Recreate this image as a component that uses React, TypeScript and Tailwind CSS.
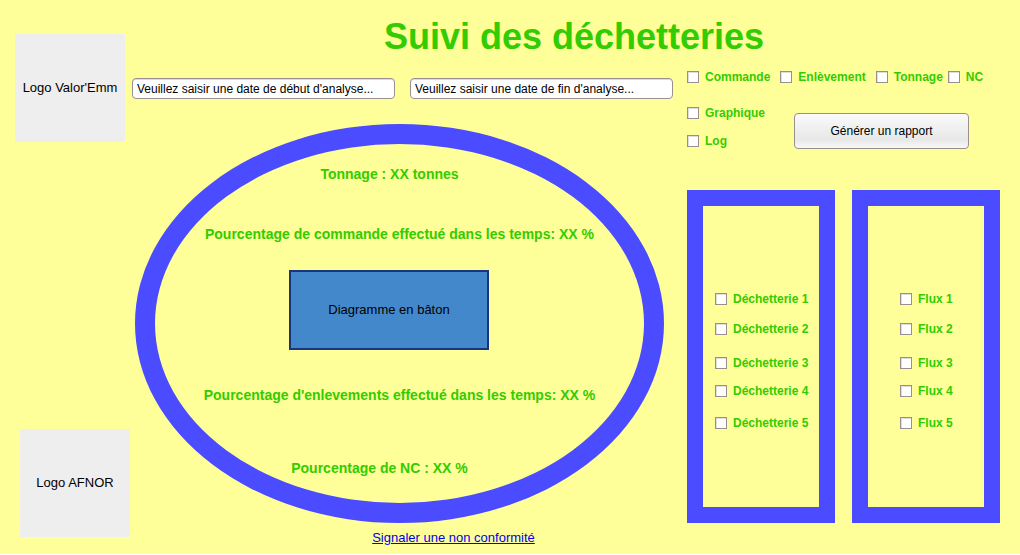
import React from "react";

type Option = { label: string; spacing?: string };

const sites: Option[] = [
  { label: "Déchetterie 1" },
  { label: "Déchetterie 2", spacing: "mt-3.5" },
  { label: "Déchetterie 3", spacing: "mt-4.5" },
  { label: "Déchetterie 4", spacing: "mt-3" },
  { label: "Déchetterie 5", spacing: "mt-4" },
];

const flows: Option[] = [
  { label: "Flux 1" },
  { label: "Flux 2", spacing: "mt-3.5" },
  { label: "Flux 3", spacing: "mt-4.5" },
  { label: "Flux 4", spacing: "mt-3" },
  { label: "Flux 5", spacing: "mt-4" },
];

function Check({ label, spacing = "" }: Option) {
  return (
    <label className={`flex h-4 items-center gap-1.5 text-xs font-bold whitespace-nowrap text-[#33cc00] ${spacing}`}>
      <input
        type="checkbox"
        className="size-3 shrink-0 appearance-none border border-[#998f8f] bg-white shadow-[inset_1px_1px_0_#dddddd] checked:bg-[#4b4bff]"
      />
      {label}
    </label>
  );
}

function Logo({ children, className = "" }: { children: React.ReactNode; className?: string }) {
  return (
    <div className={`flex h-[108px] w-[110px] items-center justify-center bg-[#eeeeee] text-[13px] text-black ${className}`}>
      {children}
    </div>
  );
}

function DateField({ label }: { label: string }) {
  return (
    <input
      type="text"
      aria-label={label}
      placeholder={label}
      className="h-[21px] min-w-0 flex-1 rounded border border-[#998f8f] bg-white px-1 text-xs text-black shadow-[inset_0_1px_0_#dddddd] placeholder:text-black placeholder:opacity-100"
    />
  );
}

function Panel({ options, className }: { options: Option[]; className: string }) {
  return (
    <fieldset className={`min-w-0 border-16 border-[#4b4bff] pt-[85px] pb-[76px] ${className}`}>
      {options.map((o) => (
        <Check key={o.label} {...o} />
      ))}
    </fieldset>
  );
}

export default function App() {
  return (
    <div className="flex bg-[#ffff99] pr-5 font-['Liberation_Sans',Arial,sans-serif]">
      <aside className="flex w-[132px] shrink-0 flex-col justify-between pt-[34px] pb-[17px]">
        <Logo className="ml-[15px]">Logo Valor'Emm</Logo>
        <Logo className="ml-5">Logo AFNOR</Logo>
      </aside>

      <div className="min-w-0 flex-1">
        <header className="pt-4 pl-4 text-center">
          <h1 className="text-4xl leading-[42px] font-bold text-[#33cc00]">Suivi des déchetteries</h1>
        </header>

        <div className="flex gap-3.5">
          <main className="min-w-0 flex-1 pt-5 pb-1.5">
            <div className="flex gap-[15px]">
              <DateField label="Veuillez saisir une date de début d'analyse..." />
              <DateField label="Veuillez saisir une date de fin d'analyse..." />
            </div>

            <section className="mt-[25px] mr-[9px] ml-[3px] flex flex-col items-center rounded-[50%] border-20 border-[#4b4bff] pt-5 pb-[25px] text-sm leading-5 font-bold whitespace-nowrap text-[#33cc00]">
              <p className="pr-5">Tonnage : XX tonnes</p>
              <p className="mt-10">Pourcentage de commande effectué dans les temps: XX %</p>
              <div className="mt-[26px] mr-[21px] flex h-20 w-[200px] items-center justify-center border-2 border-[#1a3580] bg-[#4488cc] text-[13px] font-normal text-black">
                Diagramme en bâton
              </div>
              <p className="mt-[35px]">Pourcentage d'enlevements effectué dans les temps: XX %</p>
              <p className="mt-[53px] pr-10">Pourcentage de NC : XX %</p>
            </section>

            <p className="mt-[5px] pl-[102px] text-center text-[13px] leading-5">
              <a href="#non-conformite" className="text-[#0000ee] underline">
                Signaler une non conformité
              </a>
            </p>
          </main>

          <aside className="flex w-[313px] shrink-0 flex-col pt-[11px] pb-[31px]">
            <div className="flex gap-2.5">
              <Check label="Commande" />
              <Check label="Enlèvement" />
              <div className="flex gap-[5px]">
                <Check label="Tonnage" />
                <Check label="NC" />
              </div>
            </div>

            <div className="mt-5 flex">
              <div className="flex w-[107px] flex-col gap-3">
                <Check label="Graphique" />
                <Check label="Log" />
              </div>
              <button
                type="button"
                className="mt-2 h-9 w-[175px] rounded border border-[#998f8f] bg-linear-to-b from-[#fafafa] via-[#e8e8e8] via-75% to-[#f8f8f8] text-xs text-black"
              >
                Générer un rapport
              </button>
            </div>

            <div className="mt-[41px] grid flex-1 grid-cols-2 gap-[17px]">
              <Panel options={sites} className="pl-3" />
              <Panel options={flows} className="pl-8" />
            </div>
          </aside>
        </div>
      </div>
    </div>
  );
}
